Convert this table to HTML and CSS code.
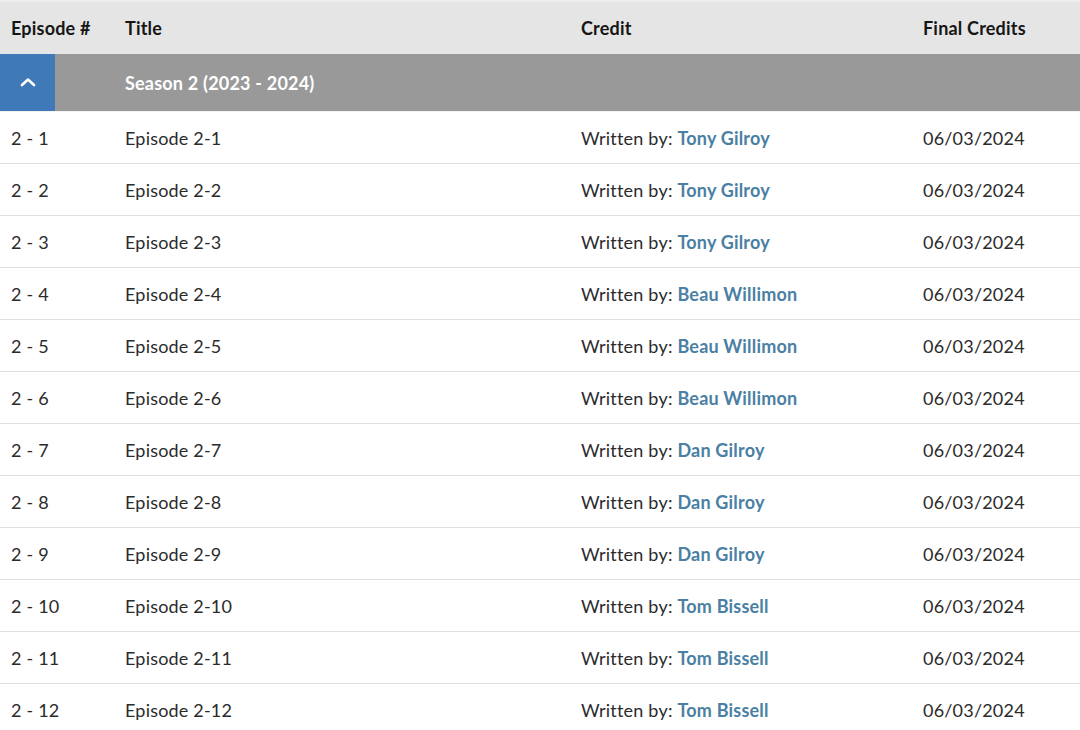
FILE: index.html
```html
<!DOCTYPE html>
<html lang="en">
<head>
<meta charset="utf-8">
<title>Episodes</title>
<link rel="stylesheet" href="styles.css">
</head>
<body>
<table class="episodes">
  <colgroup>
    <col class="c-num"><col class="c-title"><col class="c-credit"><col class="c-final">
  </colgroup>
  <thead>
    <tr class="head">
      <th>Episode #</th><th>Title</th><th>Credit</th><th>Final Credits</th>
    </tr>
  </thead>
  <tbody>
    <tr class="season">
      <td class="toggle-cell"><div class="season-wrap"><span class="toggle"><svg width="16" height="10" viewBox="0 0 16 10"><path d="M2 8 L8 2.5 L14 8" fill="none" stroke="#fff" stroke-width="2.6" stroke-linecap="round" stroke-linejoin="round"/></svg></span><span class="gray-fill"></span></div></td>
      <td colspan="3" class="season-title">Season 2 (2023 - 2024)</td>
    </tr>
    <tr><td>2 - 1</td><td>Episode 2-1</td><td>Written by: <a>Tony Gilroy</a></td><td>06/03/2024</td></tr>
    <tr><td>2 - 2</td><td>Episode 2-2</td><td>Written by: <a>Tony Gilroy</a></td><td>06/03/2024</td></tr>
    <tr><td>2 - 3</td><td>Episode 2-3</td><td>Written by: <a>Tony Gilroy</a></td><td>06/03/2024</td></tr>
    <tr><td>2 - 4</td><td>Episode 2-4</td><td>Written by: <a>Beau Willimon</a></td><td>06/03/2024</td></tr>
    <tr><td>2 - 5</td><td>Episode 2-5</td><td>Written by: <a>Beau Willimon</a></td><td>06/03/2024</td></tr>
    <tr><td>2 - 6</td><td>Episode 2-6</td><td>Written by: <a>Beau Willimon</a></td><td>06/03/2024</td></tr>
    <tr><td>2 - 7</td><td>Episode 2-7</td><td>Written by: <a>Dan Gilroy</a></td><td>06/03/2024</td></tr>
    <tr><td>2 - 8</td><td>Episode 2-8</td><td>Written by: <a>Dan Gilroy</a></td><td>06/03/2024</td></tr>
    <tr><td>2 - 9</td><td>Episode 2-9</td><td>Written by: <a>Dan Gilroy</a></td><td>06/03/2024</td></tr>
    <tr><td>2 - 10</td><td>Episode 2-10</td><td>Written by: <a>Tom Bissell</a></td><td>06/03/2024</td></tr>
    <tr><td>2 - 11</td><td>Episode 2-11</td><td>Written by: <a>Tom Bissell</a></td><td>06/03/2024</td></tr>
    <tr><td>2 - 12</td><td>Episode 2-12</td><td>Written by: <a>Tom Bissell</a></td><td>06/03/2024</td></tr>
  </tbody>
</table>
</body>
</html>
```
FILE: styles.css
```css
html, body {
  margin: 0;
  padding: 0;
  background: #fff;
}
body {
  font-family: Lato, "Open Sans", "Liberation Sans", sans-serif;
  font-size: 18px;
  letter-spacing: 0.2px;
  color: #2b2b2b;
}
.episodes {
  width: 1080px;
  border-collapse: collapse;
  table-layout: fixed;
}
.c-num { width: 114px; }
.c-title { width: 456px; }
.c-credit { width: 342px; }
.c-final { width: 168px; }

.episodes th,
.episodes td {
  padding: 0 11px;
  text-align: left;
  vertical-align: middle;
  white-space: nowrap;
}
.head {
  background: #e5e5e5;
  border-top: 2px solid #eeeeee;
}
.head th {
  height: 52px;
  font-weight: 700;
  color: #161616;
}
.season {
  background: #999999;
  border-bottom: 1px solid #f2f2f2;
}
.season td {
  height: 57px;
}
.season .toggle-cell {
  padding: 0;
}
.season-wrap {
  display: flex;
  height: 57px;
}
.toggle {
  width: 55px;
  background: #4079b8;
  display: flex;
  align-items: center;
  justify-content: center;
}
.toggle svg { display: block; margin-top: -2px; }
.gray-fill { flex: 1; }
.season-title {
  color: #fff;
  font-weight: 700;
}
tbody tr:not(.season) td {
  height: 51px;
  border-bottom: 1px solid #e0e0e0;
}
tbody tr:last-child td {
  border-bottom: none;
}
a {
  color: #4a80a3;
  font-weight: 700;
  text-decoration: none;
}
```
